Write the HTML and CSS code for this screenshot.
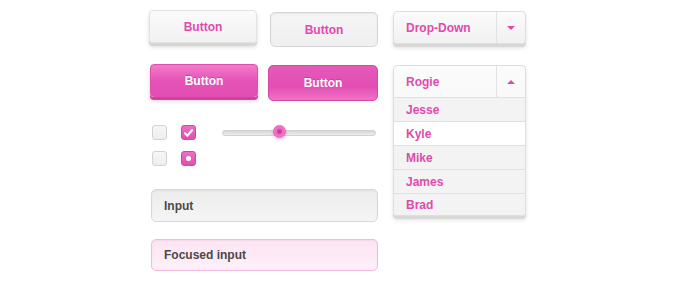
FILE: index.html
```html
<!DOCTYPE html>
<html>
<head>
	<meta charset="UTF-8">
	<title>Pink UI Kit</title>
	<link rel="stylesheet" href="styles.css">
</head>
<body>
	<main class="kit">
		<div class="col-left">
			<div class="btn-row row-top">
				<button class="btn btn-light">Button</button>
				<button class="btn btn-light-flat">Button</button>
			</div>
			<div class="btn-row row-pink">
				<button class="btn btn-pink">Button</button>
				<button class="btn btn-pink-flat">Button</button>
			</div>
			<div class="controls">
				<div class="checks">
					<span class="check"></span>
					<span class="check on">
						<svg width="9" height="8" viewBox="0 0 9 8"><path d="M1 4.2 L3.4 6.6 L8 1.2" fill="none" stroke="#fff" stroke-width="2.2" stroke-linecap="round" stroke-linejoin="round"/></svg>
					</span>
					<span class="check"></span>
					<span class="check on"><i class="dot"></i></span>
				</div>
				<div class="slider">
					<div class="track"></div>
					<div class="thumb"></div>
				</div>
			</div>
			<div class="input">Input</div>
			<div class="input focused">Focused input</div>
		</div>

		<div class="col-right">
			<div class="dropdown closed">
				<div class="dd-head">
					<span class="dd-label">Drop-Down</span>
					<span class="dd-arrow down"></span>
				</div>
			</div>
			<div class="dropdown open">
				<div class="dd-head">
					<span class="dd-label">Rogie</span>
					<span class="dd-arrow up"></span>
				</div>
				<ul class="dd-list">
					<li>Jesse</li>
					<li class="active">Kyle</li>
					<li>Mike</li>
					<li>James</li>
					<li>Brad</li>
				</ul>
			</div>
		</div>
	</main>
</body>
</html>
```

FILE: styles.css
```css
body {
	margin: 0;
	padding: 0;
	background-color: #fff;
	font-family: "Liberation Sans", Arial, sans-serif;
	font-size: 12px;
	font-weight: bold;
}

.kit {
	display: flex;
	gap: 15px;
	padding: 10px 0 0 149px;
}

.col-left {
	width: 229px;
	display: flex;
	flex-direction: column;
}

.btn-row {
	display: flex;
	justify-content: space-between;
	align-items: flex-end;
}

.row-pink {
	margin-top: 17px;
}

.btn {
	font-family: inherit;
	font-size: 12px;
	font-weight: bold;
	cursor: pointer;
	padding: 0;
	margin: 0;
	width: 108px;
}

.btn-light {
	height: 33px;
	color: #e04aad;
	background: linear-gradient(#fbfbfb, #f1f1f1);
	border: 1px solid #e3e3e3;
	border-radius: 4px;
	box-shadow: 0 3px 0 #d6d6d6, 0 4px 4px rgba(0,0,0,0.15);
	margin-bottom: 4px;
}

.btn-light-flat {
	height: 35px;
	color: #e04aad;
	background: linear-gradient(#f5f5f5, #efefef);
	border: 1px solid #d6d6d6;
	border-radius: 5px;
	box-shadow: inset 0 1px 2px rgba(0,0,0,0.06);
}

.btn-pink {
	height: 33px;
	margin-left: 1px;
	color: #fff;
	text-shadow: 0 -1px 0 rgba(150,20,100,0.35);
	background: linear-gradient(#f27cc8, #e653b8 50%, #e24db3);
	border: 1px solid #de4fb0;
	border-radius: 4px;
	box-shadow: 0 3px 0 #d43ea5, 0 4px 4px rgba(0,0,0,0.18);
	margin-bottom: 3px;
}

.btn-pink-flat {
	height: 36px;
	width: 110px;
	color: #fff;
	text-shadow: 0 -1px 0 rgba(150,20,100,0.35);
	background: linear-gradient(#e55ab9, #e24db3 60%, #ee74c4);
	border: 1px solid #d548a9;
	border-radius: 5px;
	margin-bottom: -1px;
}

.controls {
	display: flex;
	align-items: flex-start;
	margin-top: 25px;
	padding-left: 3px;
}

.checks {
	display: grid;
	grid-template-columns: 15px 15px;
	column-gap: 14px;
	row-gap: 11px;
}

.check {
	width: 15px;
	height: 15px;
	box-sizing: border-box;
	border: 1px solid #d2d2d2;
	border-radius: 3px;
	background: linear-gradient(#f6f6f6, #eeeeee);
	display: flex;
	align-items: center;
	justify-content: center;
}

.check.on {
	border-color: #cf48a6;
	background: linear-gradient(#ee6fc3, #e04fb3);
}

.dot {
	width: 5px;
	height: 5px;
	border-radius: 50%;
	background: #fff;
}

.slider {
	position: relative;
	margin-left: 26px;
	width: 154px;
	height: 15px;
}

.track {
	margin-top: 5px;
	height: 4px;
	background: linear-gradient(#d6d6d6, #ececec);
	border: 1px solid #d2d2d2;
	border-radius: 3px;
}

.thumb {
	position: absolute;
	left: 51px;
	top: 0;
	width: 13px;
	height: 13px;
	box-sizing: border-box;
	border-radius: 50%;
	background: radial-gradient(circle, #c8329a 0, #d8409f 2px, #ea6ac0 3px, #f28bd0 100%);
	border: 1px solid #e560b9;
	box-shadow: 0 1px 3px rgba(220,70,170,0.45);
}

.input {
	height: 33px;
	box-sizing: border-box;
	display: flex;
	align-items: center;
	padding-left: 12px;
	margin-left: 2px;
	color: #4a4a4a;
	background: linear-gradient(#ececec, #f5f5f5);
	border: 1px solid #d8d8d8;
	border-radius: 5px;
	box-shadow: inset 0 1px 2px rgba(0,0,0,0.05);
	margin-top: 23px;
}

.input.focused {
	height: 32px;
	margin-top: 17px;
	background: linear-gradient(#fde4f3, #fdf0f8);
	border-color: #f2b9de;
}

.col-right {
	width: 133px;
	display: flex;
	flex-direction: column;
	gap: 21px;
	padding-top: 1px;
}

.dropdown {
	box-sizing: border-box;
	border: 1px solid #dedede;
	border-radius: 4px;
	background: linear-gradient(#fbfbfb, #f1f1f1);
	box-shadow: 0 3px 0 #d8d8d8, 0 4px 4px rgba(0,0,0,0.12);
	color: #e04aad;
	overflow: hidden;
}

.dd-head {
	display: flex;
	height: 31px;
}

.dd-label {
	flex: 1;
	display: flex;
	align-items: center;
	padding-left: 12px;
}

.dd-arrow {
	width: 28px;
	border-left: 1px solid #e2e2e2;
	display: flex;
	align-items: center;
	justify-content: center;
}

.dd-arrow::after {
	content: "";
	border-left: 4px solid transparent;
	border-right: 4px solid transparent;
}

.dd-arrow.down::after {
	border-top: 4px solid #e04aad;
}

.dd-arrow.up::after {
	border-bottom: 4px solid #e04aad;
}

.dd-list {
	list-style: none;
	margin: 0;
	padding: 0;
}

.dd-list li {
	height: 23px;
	display: flex;
	align-items: center;
	padding-left: 12px;
	border-top: 1px solid #e0e0e0;
	background: #f3f3f3;
}

.dd-list li.active {
	background: #fff;
}

.dd-list li:last-child {
	height: 21px;
}
```
